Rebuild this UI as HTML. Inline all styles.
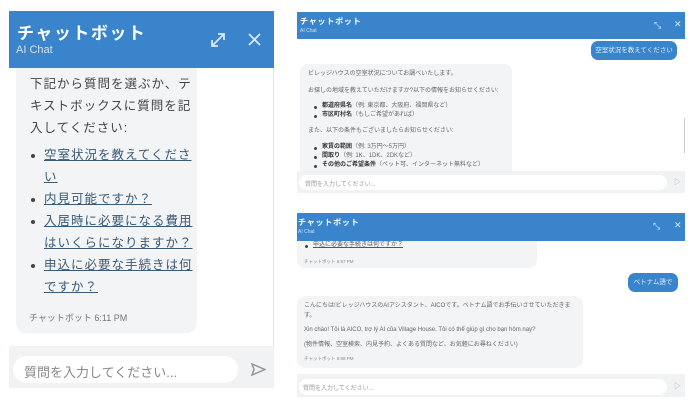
<!DOCTYPE html><html><head><meta charset="utf-8"><style>
*{margin:0;padding:0;box-sizing:border-box}
body{width:696px;height:404px;background:#fff;position:relative;overflow:hidden;font-family:"Liberation Sans","Noto Sans CJK JP",sans-serif;color:#444}
.a{position:absolute}
.hd{background:#3a84cc;color:#fff}
.bub{background:#f3f4f6;border-radius:10px}
.ub{background:#3a84cc;color:#e6f0fa;border-radius:7px;text-align:center}
.lk{color:#3a5a75;text-decoration:underline}
ul{list-style:none}
li{position:relative}
li:before{content:"";position:absolute;background:#444;border-radius:50%}
.s li:before{width:3px;height:3px;left:-8px;top:4px}
.s{font-size:6px;line-height:9px;color:#666}
.l li:before{width:4px;height:4px;left:-13px;top:10px}
</style></head><body>
<!-- left panel -->
<div class="a hd" style="left:9px;top:11px;width:265px;height:57px">
 <div class="a" style="left:8px;top:8px;font-size:17px;font-weight:bold;letter-spacing:1.5px">チャットボット</div>
 <div class="a" style="left:7px;top:33px;font-size:11px;color:#cfe2f5">AI Chat</div>
 <svg class="a" style="left:200px;top:20px" width="18" height="18" viewBox="0 0 18 18" fill="none" stroke="#dbe9f7" stroke-width="1.8"><path d="M3 15L15 3M9 3h6v6M3 9v6h6"/></svg>
 <svg class="a" style="left:239px;top:22px" width="13" height="13" viewBox="0 0 13 13" stroke="#dbe9f7" stroke-width="1.8"><path d="M1 1L12 12M12 1L1 12"/></svg>
</div>
<div class="a" style="left:273px;top:68px;width:1px;height:278px;background:#e3e3e3"></div>
<div class="a bub" style="left:16px;top:68px;width:181px;height:265px;border-radius:0 0 10px 10px">
 <div class="a" style="left:14px;top:5px;width:165px;font-size:12.5px;letter-spacing:1px;line-height:22px;color:#444">下記から質問を選ぶか、テキストボックスに質問を記入してください:</div>
 <ul class="a l" style="left:28px;top:76px;width:152px;font-size:12.5px;letter-spacing:1px;line-height:22px">
  <li><span class="lk">空室状況を教えてください</span></li>
  <li><span class="lk">内見可能ですか？</span></li>
  <li><span class="lk">入居時に必要になる費用はいくらになりますか？</span></li>
  <li><span class="lk">申込に必要な手続きは何ですか？</span></li>
 </ul>
 <div class="a" style="left:13px;top:243px;font-size:9px;color:#777">チャットボット 6:11 PM</div>
</div>
<div class="a" style="left:9px;top:346px;width:265px;height:42px;background:#f1f2f4">
 <div class="a" style="left:4px;top:10px;width:225px;height:27px;background:#fff;border-radius:14px;font-size:13px;color:#888;padding:6px 0 0 11px">質問を入力してください...</div>
 <svg class="a" style="left:242px;top:17px" width="15" height="13" viewBox="0 0 15 13" fill="none" stroke="#999" stroke-width="1.5"><path d="M1 1L14 6.5L1 12L3 6.5Z"/></svg>
</div>

<!-- right top -->
<div class="a hd" style="left:297px;top:12px;width:388px;height:27px">
 <div class="a" style="left:3px;top:4px;font-size:8px;font-weight:bold;letter-spacing:.8px">チャットボット</div>
 <div class="a" style="left:3px;top:16px;font-size:5px;color:#cfe2f5">AI Chat</div>
 <div class="a" style="left:357px;top:8px;font-size:9px;color:#dbe9f7">⤡</div>
 <div class="a" style="left:377px;top:7px;font-size:9px;color:#dbe9f7">✕</div>
</div>
<div class="a ub" style="left:591px;top:41px;width:86px;height:19px;font-size:6.5px;line-height:19px">空室状況を教えてください</div>
<div class="a bub s" style="left:300px;top:64px;width:212px;height:107px;border-radius:8px 8px 0 0;padding:6px 0 0 8px">
 <div>ビレッジハウスの空室状況についてお調べいたします。</div>
 <div style="margin-top:8px">お探しの地域を教えていただけますか?以下の情報をお知らせください:</div>
 <ul style="margin:6px 0 0 14px"><li><b style="color:#333">都道府県名</b>（例: 東京都、大阪府、福岡県など）</li><li><b style="color:#333">市区町村名</b>（もしご希望があれば）</li></ul>
 <div style="margin-top:7px">また、以下の条件もございましたらお知らせください:</div>
 <ul style="margin:7px 0 0 14px"><li><b style="color:#333">家賃の範囲</b>（例: 3万円〜5万円）</li><li><b style="color:#333">間取り</b>（例: 1K、1DK、2DKなど）</li><li><b style="color:#333">その他のご希望条件</b>（ペット可、インターネット無料など）</li></ul>
</div>
<div class="a" style="left:684px;top:118px;width:1px;height:35px;background:#ccc"></div>
<div class="a" style="left:297px;top:171px;width:388px;height:22px;background:#f1f2f4">
 <div class="a" style="left:2px;top:4px;width:368px;height:15px;background:#fff;border-radius:8px;font-size:6px;color:#999;padding:4px 0 0 6px">質問を入力してください...</div>
 <div class="a" style="left:377px;top:6px;font-size:7px;color:#aaa">▷</div>
</div>

<!-- right bottom -->
<div class="a bub s" style="left:297px;top:238px;width:240px;height:30px;border-radius:0 0 8px 8px;padding:3px 0 0 16px">
 <ul><li><span class="lk" style="color:#556">申込に必要な手続きは何ですか？</span></li></ul>
 <div style="margin:7px 0 0 -9px;font-size:4.5px;color:#888">チャットボット 6:57 PM</div>
</div>
<div class="a hd" style="left:297px;top:213px;width:388px;height:28px">
 <div class="a" style="left:1px;top:4px;font-size:8px;font-weight:bold;letter-spacing:.8px">チャットボット</div>
 <div class="a" style="left:1px;top:16px;font-size:5px;color:#cfe2f5">AI Chat</div>
 <div class="a" style="left:356px;top:8px;font-size:9px;color:#dbe9f7">⤡</div>
 <div class="a" style="left:377px;top:7px;font-size:9px;color:#dbe9f7">✕</div>
</div>
<div class="a ub" style="left:628px;top:273px;width:50px;height:19px;font-size:6.5px;line-height:19px">ベトナム語で</div>
<div class="a bub s" style="left:297px;top:296px;width:286px;height:72px;border-radius:8px;padding:5px 8px 0 7px">
 <div style="line-height:10px">こんにちは!ビレッジハウスのAIアシスタント、AICOです。ベトナム語でお手伝いさせていただきます。</div>
 <div style="margin-top:5px">Xin chào! Tôi là AICO, trợ lý AI của Village House. Tôi có thể giúp gì cho bạn hôm nay?</div>
 <div style="margin-top:6px">(物件情報、空室検索、内見予約、よくある質問など、お気軽にお尋ねください)</div>
 <div style="margin-top:4px;font-size:4.5px;color:#888">チャットボット 6:58 PM</div>
</div>
<div class="a" style="left:297px;top:374px;width:388px;height:23px;background:#f1f2f4">
 <div class="a" style="left:2px;top:5px;width:368px;height:16px;background:#fff;border-radius:8px;font-size:6px;color:#999;padding:4px 0 0 4px">質問を入力してください...</div>
 <div class="a" style="left:377px;top:7px;font-size:7px;color:#aaa">▷</div>
</div>
</body></html>
